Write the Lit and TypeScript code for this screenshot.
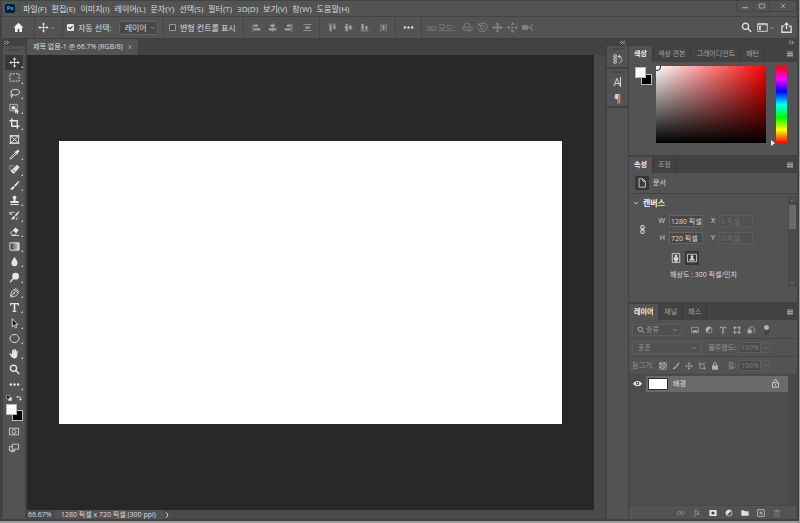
import { LitElement, html, css, svg, TemplateResult } from "lit";
import { customElement, property } from "lit/decorators.js";

const ICONS: Record<string, TemplateResult> = {
  home: svg`<path class="f" d="M6 .8 .6 6h1.6v5h2.9V7.6h1.8V11h2.9V6h1.6z"/>`,
  move: svg`<path class="s" d="M6 1.5v9M1.5 6h9"/><path class="f" d="M6 .3 4.2 2.6h3.6zM6 11.7l1.8-2.3H4.2zM.3 6l2.3 1.8V4.2zM11.7 6 9.4 4.2v3.6z"/>`,
  marquee: svg`<path class="s" stroke-dasharray="2 1.3" d="M1 2h10v8H1z"/>`,
  lasso: svg`<ellipse class="s" cx="6.8" cy="4.6" rx="4.6" ry="3.1"/><path class="s" d="M3.3 6.6C1.2 7 1.4 9 3 8.8s1.3-1.6.3-2.2M3.2 8.8 2.6 11"/>`,
  object: svg`<path class="s" opacity=".7" d="M1 1.5h8v7H1z"/><path class="f" d="M3 3.5h4v3.6H3zM6.5 5v6.5L8 10l1 2 1.2-.6-1-1.9h1.9z"/>`,
  crop: svg`<path class="s w" d="M3 .5V9h8.5M.5 3H9v8.7"/>`,
  frame: svg`<path class="s" d="M1.5 2h9v8h-9zM1.5 2l9 8M10.5 2l-9 8M.5 2h11M.5 10h11"/>`,
  dropper: svg`<path class="s" d="M7 4 2 9l-.8 2L3 10.300l5-5"/><path class="f" d="m5.700 3.200 3.200 3.200.8-.8-.6-.8 2-2.100c.7-.9-1-2.500-1.900-1.800L7.200 3l-.7-.6z"/>`,
  heal: svg`<path class="f" d="M8.800.8 11.500 3.500 5.200 11 1.600 7.500z"/><path class="s d" stroke-width=".6" d="m4.500 6.500 2.500 2"/><path class="s" stroke-dasharray="1 1" d="M1 6V2h4.500"/>`,
  brush: svg`<path class="f" d="M11.300.8c-2 .8-4.600 3.600-5.800 5.400l1.300 1.200C8.500 6 10.900 3 11.300.8zM4.800 6.800C3 6.800 3.200 9.500.8 9.900c2 1.500 5.100.7 5.300-1.900z"/>`,
  stamp: svg`<path class="f" d="M6 .7a2.100 2.100 0 0 0-1.600 3.500c.7.9.6 1.600.2 2.400H1.500v2.200h9V6.600H7.400c-.4-.8-.5-1.500.2-2.400A2.100 2.100 0 0 0 6 .7zM1.500 9.800h9V11h-9z"/>`,
  history: svg`<path class="f" d="M11.300 1.200c-1.800.7-4 3.200-5 4.700l1.200 1C9 5.700 11 3.200 11.300 1.200zM5.600 6.500C4 6.500 4.200 9 2 9.500c1.800 1.500 4.700.7 4.800-1.800z"/><path class="s" d="M1 2v2.500h2.500M1.300 4.300C2.500 2 4.500 2 6 2.700M9 8c0 1.500-.6 2.300-1.500 3"/>`,
  eraser: svg`<path class="f" d="m6.800 1.700 3.800 2.900-2.700 3.200-3.700-2.900z"/><path class="s" d="M4 5.200 1.500 8l2.200 2h2.500l1.500-2M3 10.300h8"/>`,
  gradient: svg`<defs><linearGradient id="g"><stop offset="0" stop-color="#333"/><stop offset="1" stop-color="#ddd"/></linearGradient></defs><path class="ramp" d="M1 2h10v8H1z"/>`,
  drop: svg`<path class="f" d="M6 .8C5 3 2.600 5.200 2.600 7.700a3.400 3.400 0 0 0 6.800 0C9.400 5.200 7 3 6 .8z"/>`,
  dodge: svg`<circle class="f" cx="7.200" cy="4.500" r="3.700"/><path class="s w" d="M4.500 7.300 1.200 11"/>`,
  pen: svg`<path class="s" d="m7 1.500 3.700 3.400-1 1.300c.2 2.300-2 3.900-6.700 4.600L1.800 10C2.200 6 3.700 3.200 6 3zM2 10.500l3.500-4M6 3l3.700 3.200"/><circle class="f" cx="6" cy="6.200" r=".9"/>`,
  type: svg`<path class="f" d="M1.200 1.200h9.600v2.900H9.900c-.2-1.300-.7-1.700-1.700-1.700H6.900v7c0 .6.300.8 1.400.9v.7H3.700v-.7c1.100-.1 1.400-.3 1.400-.9v-7H3.800c-1 0-1.500.4-1.700 1.700h-.9z"/>`,
  arrow: svg`<path class="k" d="M3.500.8v8.900l2.100-1.900 1.400 3 1.400-.7L7 7.200h2.700z"/>`,
  ellipse: svg`<path class="s" d="M4 1.800h4l2.800 2.700v3L8 10.200H4L1.200 7.500v-3z"/>`,
  hand: svg`<path class="f" d="M3.300 7V2.600c0-1 1.200-1 1.300 0l.2 2.600V1.500c0-1 1.300-1 1.400 0v3.700l.3-3.300c.1-.9 1.300-.8 1.300.1l-.1 3.600.6-2.300c.3-.9 1.400-.5 1.300.3L9 8.200c-.3 2-1.300 3.200-3.200 3.200-1.700 0-2.500-.8-3.300-2L.7 6.900c-.5-.8.5-1.500 1.200-.8z"/>`,
  zoom: svg`<circle class="s w" cx="4.900" cy="4.700" r="3.400"/><path class="s w" d="m7.400 7.200 3.800 3.800"/>`,
  dots: svg`<circle class="f" cx="2" cy="6" r="1.300"/><circle class="f" cx="6" cy="6" r="1.300"/><circle class="f" cx="10" cy="6" r="1.300"/>`,
  mask: svg`<path class="s" d="M.5 2h11v8H.5z"/><circle class="s" cx="6" cy="6" r="2.400"/>`,
  screens: svg`<path class="s" d="M4 2h7.500v6H4zM4 5H.5v4.500H7V8M2 11h5"/>`,
  defaults: svg`<path class="f" d="M4.500 4.500h7v7h-7z"/><path class="k" d="M1 1h6.500v6.500H1z"/>`,
  swap: svg`<path class="s w" d="M3 4h6v5"/><path class="f" d="M4 .8v6.400L.5 4zM5.800 8h6.400L9 11.600z"/>`,
  chevron: svg`<path class="s" d="m3 4.500 3 3 3-3"/>`,
  up: svg`<path class="s" d="m3 7.500 3-3 3 3"/>`,
  right: svg`<path class="s w" d="m4.500 2 3 4-3 4"/>`,
  alignL: svg`<path class="s" d="M1.500.5v11"/><path class="f" d="M3 2h5v3H3zM3 7h8v3H3z"/>`,
  alignC: svg`<path class="s" d="M6 .5v11"/><path class="f" d="M3 2h6v3H3zM1 7h10v3H1z"/>`,
  alignR: svg`<path class="s" d="M10.500.5v11"/><path class="f" d="M4 2h5v3H4zM1 7h8v3H1z"/>`,
  distV: svg`<path class="s" d="M.5 2h11M.5 10h11"/><path class="f" d="M3 4.500h6v3H3z"/>`,
  alignT: svg`<path class="s" d="M.5 1.500h11"/><path class="f" d="M2 3h3v8H2zM7 3h3v5H7z"/>`,
  alignM: svg`<path class="s" d="M.5 6h11"/><path class="f" d="M2 1h3v10H2zM7 3h3v6H7z"/>`,
  alignB: svg`<path class="s" d="M.5 10.500h11"/><path class="f" d="M2 1h3v8H2zM7 4h3v5H7z"/>`,
  distH: svg`<path class="s" d="M2.500.5v11M9.500.5v11"/><path class="f" d="M4.700 2.500h2.600v7H4.700z"/>`,
  orbit: svg`<circle class="s" cx="5.500" cy="4" r="2.800"/><path class="s" d="M2.700 4C-.5 6 1 9 6 9.200h3M8.300 5c4 1.500 3.500 4 .7 4.200M9 7 7 9.200 9 11"/>`,
  roll: svg`<circle class="s" cx="6" cy="6" r="2"/><path class="s" d="M2 1v3h3M2 3.800C5-1.200 12 1.500 11 6.500S2.500 12 1.200 7"/>`,
  pan: svg`<path class="s" d="M6 2v8M2 6h8M4 4l4 4M8 4 4 8"/><path class="f" d="M6 0 3.800 3h4.400zM6 12l2.200-3H3.800zM0 6l3 2.200V3.800zM12 6 9 3.800v4.400z"/>`,
  slide: svg`<path class="f" d="M6 0 3.800 3h4.400zM6 12 8.200 9H3.800zM0 6l3 2.200V3.800zM12 6 9 3.800v4.400zM4.800 4.800h2.400v2.400H4.800z"/>`,
  camera: svg`<path class="f" d="M0 3.500h6.500v5H0zM6.500 6 9 4v4z"/><path class="s" d="M11.500 2 9.800 6l1.700 4"/>`,
  workspace: svg`<path class="s" d="M.8 1.800h10.400v8.400H.8zM.8 3h10.400"/><path class="f" d="M2.200 4.300h2v4.500h-2z"/>`,
  share: svg`<path class="s w" d="M3.500 4.500H1v6.700h10V4.500H8.500M6 8V1.500"/><path class="f" d="M6 0 3.200 3.200h5.600z"/>`,
  min: svg`<path class="f" d="M2 7.500h8v2H2z"/>`,
  max: svg`<path class="s w" d="M2 3h8v6H2z"/>`,
  close: svg`<path class="s w" d="m3 2.500 6 7M9 2.500l-6 7"/>`,
  left2: svg`<path class="s w" d="M5.500 3 2.500 6l3 3M10 3 7 6l3 3"/>`,
  right2: svg`<path class="s w" d="m2 3 3 3-3 3M6.500 3l3 3-3 3"/>`,
  menu: svg`<path class="f" d="M0 1h12v2H0zM0 4h12v2H0zM0 7h12v4H0z"/>`,
  versions: svg`<path class="s" d="M1 1h3v2.600H1zM1 4.700h3v2.600H1zM1 8.400h3V11H1zM7.500 11c3-1.500 4-5 1.500-8H6.500"/><path class="f" d="M8.500.5v5L5.500 3z"/>`,
  doc: svg`<path class="s" d="M2.500 1h4.500l3 3v7H2.500zM7 1v3h3"/>`,
  chain: svg`<rect class="s w" x="3.800" y=".7" width="4.400" height="5" rx="2"/><rect class="s w" x="3.800" y="6.300" width="4.400" height="5" rx="2"/><path class="s" d="M6 4v4"/>`,
  portrait: svg`<path class="s" d="M1.500.7h9v10.600h-9z"/><circle class="f" cx="6" cy="3.500" r="1.500"/><path class="f" d="M3.300 5h5.400v3.500H7.700v2H4.300v-2h-1z"/>`,
  landscape: svg`<path class="s" d="M.5 1.500h11v9H.5z"/><circle class="f" cx="6" cy="4.500" r="1.700"/><path class="f" d="M2.800 9c0-4 6.400-4 6.400 0z"/>`,
  picture: svg`<path class="s" d="M1 2h10v8H1z"/><path class="f" d="m2 9 2.500-3.500 1.700 1.700 1.300-1.500L10 9z"/>`,
  adjust: svg`<circle class="s" cx="6" cy="6" r="4.600"/><path class="f" d="M2.700 9.300A4.600 4.600 0 0 1 9.300 2.700z"/>`,
  shape: svg`<path class="s" d="M2.500 2.500h7v7h-7z"/><path class="f" d="M.8.8h3v3h-3zM8.200.8h3v3h-3zM.8 8.200h3v3h-3zM8.200 8.200h3v3h-3z"/>`,
  smart: svg`<path class="s" d="M5 4V1h4l2 2v6H9"/><path class="f" d="M1 5.500h6V11H1z"/><path class="s" d="M2.500 5.500V3H5"/>`,
  checker: svg`<path class="s" d="M1 1h10v10H1z"/><path class="f" d="M1 1h3v3H1zM4 4h2.500v2.500H4zM6.500 1.500H9V4H6.500zM6.500 6.500H9V9H6.500zM1.500 6.500H4V9H1.500zM9 4h2v2.500H9zM4 9h2.500v2H4z"/>`,
  artboard: svg`<path class="s" d="M3 .5v9h8.500M.5 3h7l2 2v6.500M7.500 3 11 1"/>`,
  lock: svg`<path class="f" d="M1.500 5h9v6.500h-9z"/><path class="s w" d="M3.800 5V3.200a2.200 2.200 0 0 1 4.400 0V5"/>`,
  lockLine: svg`<path class="s" d="M2 5h8v6H2zM3.800 5V3.200a2.200 2.200 0 0 1 4.400 0V5M6 7v2.300"/>`,
  eye: svg`<path class="f" d="M0 6.200C3 1.500 9 1.500 12 6.200 9 10.700 3 10.700 0 6.200z"/><circle cx="6" cy="6" r="2.200" fill="#4d4d4d"/><circle class="f" cx="6" cy="6" r="1"/>`,
  link: svg`<rect class="s w" x=".7" y="3.800" width="5" height="4.400" rx="2"/><rect class="s w" x="6.300" y="3.800" width="5" height="4.400" rx="2"/><path class="s" d="M4 6h4"/>`,
  maskFill: svg`<path class="f" d="M.5 1.500h11v9H.5z"/><circle cx="6" cy="6" r="2.400" fill="#444"/>`,
  folder: svg`<path class="f" d="M.5 2h4l1 1.300h6V10H.5z"/>`,
  plus: svg`<path class="s" d="M1 1h10v10H1zM6 3.500v5M3.500 6h5"/>`,
  trash: svg`<path class="f" d="M1.500 2h9v1.200h-9zM4.500 1h3v1h-3z"/><path class="s" d="M2.500 4h7v7.300h-7zM4.700 5v5M7.300 5v5"/>`,
};

@customElement("ui-icon")
export class UiIcon extends LitElement {
  @property() name = "";
  static styles = css`
    :host { display: inline-flex; width: 11px; height: 11px; flex: none; color: inherit; }
    svg { width: 100%; height: 100%; overflow: visible; }
    .f { fill: currentColor; }
    .s { fill: none; stroke: currentColor; stroke-width: 1; }
    .w { stroke-width: 1.500; }
    .d { stroke: #535353; }
    .k { fill: #111; stroke: currentColor; stroke-width: 1; }
    .ramp { fill: url(#g); stroke: currentColor; stroke-width: 1; }
  `;
  render() {
    return html`<svg viewBox="0 0 12 12" aria-hidden="true">${ICONS[this.name]}</svg>`;
  }
}

const icon = (name: string, cls = "") => html`<ui-icon class=${cls} name=${name}></ui-icon>`;

const MENUS = ["파일(F)", "편집(E)", "이미지(I)", "레이어(L)", "문자(Y)", "선택(S)", "필터(T)", "3D(D)", "보기(V)", "창(W)", "도움말(H)"];
const TOOLS = ["move", "marquee", "lasso", "object", "crop", "frame", "dropper", "heal", "brush", "stamp", "history", "eraser", "gradient", "drop", "dodge", "pen", "type", "arrow", "ellipse", "hand", "zoom", "dots"];
const NO_FLYOUT = ["frame", "zoom"];

@customElement("app-root")
export class AppRoot extends LitElement {
  static styles = css`
    :host {
      display: block;
      font: 8px/12px "Open Sans", "Noto Sans CJK KR", sans-serif;
      color: #dcdcdc;
      --bar: #535353;
      --dark: #424242;
      --dim: #949494;
    }
    * { box-sizing: border-box; }
    button, input, select {
      font: inherit; color: inherit; background: none; border: 0; border-radius: 0;
      padding: 0; margin: 0; appearance: none; outline: none; min-width: 0;
    }
    button { display: inline-flex; align-items: center; justify-content: center; }
    .app {
      min-height: 100vh; display: flex; flex-direction: column; background: var(--dark);
      border: solid #9c9c9c; border-width: 0 1px 2px 0; padding: 0 2px 2px;
    }
    .row { display: flex; align-items: center; }
    .menubar { height: 17px; background: var(--bar); border-top: 1px solid #444; border-bottom: 1px solid #444; padding-left: 3px; }
    .logo {
      width: 10px; height: 9px; border-radius: 2px; background: #001e36; color: #31a8ff;
      font-size: 6px; line-height: 9px; font-weight: 700; text-align: center; margin-right: 8px;
    }
    .menus { display: flex; gap: 5px; flex: 1; }
    .menus button { white-space: nowrap; }
    .window { display: flex; align-self: flex-start; height: 11px; border: 1px solid #444; border-top: 0; border-radius: 0 0 2px 2px; color: #a4a4a4; }
    .window button { width: 16px; }
    .window button:last-child { width: 27px; }
    .window button + button { border-left: 1px solid #444; }
    .window ui-icon { width: 8px; height: 8px; }

    .options { height: 21px; background: var(--bar); }
    .group { display: flex; align-items: center; height: 100%; white-space: nowrap; }
    .group + .group { border-left: 1px solid #464646; }
    .home { width: 32px; justify-content: center; color: #f0f0f0; }
    .current { width: 28px; padding-left: 3px; }
    .auto { width: 101px; padding-left: 4px; }
    .show { width: 80px; padding-left: 5px; }
    .align { padding: 0 4px; color: #a0a0a0; }
    .align button { width: 16px; }
    .align ui-icon { width: 9px; height: 9px; }
    .align button:last-child { margin-left: 3px; }
    .more { width: 26px; justify-content: center; }
    .mode { padding-left: 4px; color: #848484; flex: 1; }
    .mode span { width: 34px; }
    .mode button { width: 15px; }
    .small { width: 8px; height: 8px; color: #a0a0a0; }
    .check { display: flex; align-items: center; gap: 4px; }
    .check input { width: 7px; height: 7px; border: 1px solid #999; border-radius: 1px; background: #484848; }
    .check input:checked { background: #e8e8e8; border-color: #e8e8e8; position: relative; }
    .check input:checked::after {
      content: ""; position: absolute; inset: 0 1px 1px 1px; border: solid #333;
      border-width: 0 1px 1px 0; transform: rotate(40deg);
    }
    .pick { position: relative; display: block; border: 1px solid #626262; border-radius: 2px; background: #484848; }
    .pick select { display: block; width: 100%; height: 100%; padding-left: 5px; }
    .pick ui-icon { position: absolute; right: 2px; top: calc(50% - 4px); width: 8px; height: 8px; pointer-events: none; }
    .auto .pick { width: 39px; height: 14px; margin-left: 7px; }
    .auto .pick ui-icon { right: 0; color: #999; }
    .tail { gap: 5px; padding-right: 5px; }
    .tail button { display: flex; }

    .main { flex: 1; display: flex; border-top: 1px solid #3e3e3e; }
    .strip { height: 7px; display: flex; align-items: center; color: #c8c8c8; }
    .strip ui-icon { width: 7px; height: 7px; }
    .end { justify-content: flex-end; padding-right: 2px; }

    .tools { width: 25px; display: flex; flex-direction: column; padding: 0 2px 0 1px; }
    .toolbox { flex: 1; background: var(--bar); padding: 0 2px; display: flex; flex-direction: column; align-items: center; }
    .grip { width: 12px; height: 2px; margin: 3px 0 4px; border: solid #474747; border-width: 1px 0; }
    .toolgrid { display: grid; grid-template-rows: repeat(22, 1fr); height: 337px; width: 100%; color: #e6e6e6; }
    .toolgrid button { position: relative; width: 100%; }
    .toolgrid button.on { background: #383838; }
    .fly::after {
      content: ""; position: absolute; right: 0; bottom: 2px;
      border: 1px solid; border-color: transparent #ccc #ccc transparent;
    }
    .mini { display: flex; justify-content: space-between; width: 100%; padding: 0 1px; margin: 3px 0; }
    .mini ui-icon { width: 6px; height: 6px; display: flex; }
    .swatches { position: relative; width: 17px; height: 17px; }
    .swatches button { position: absolute; width: 11px; height: 11px; border: 1px solid #b8b8b8; }
    .fg { left: 0; top: 0; background: #fff; z-index: 1; }
    .bg { right: 0; bottom: 0; background: #000; }
    .lower { display: flex; flex-direction: column; gap: 5px; margin-top: 5px; }
    .lower ui-icon { width: 10px; height: 11px; }

    .document { flex: 1; min-width: 0; display: flex; flex-direction: column; }
    .tabs { display: flex; height: 16px; }
    .doctab { background: var(--bar); padding: 0 5px 0 6px; display: flex; align-items: center; border-right: 1px solid #3a3a3a; font-size: 7px; white-space: nowrap; width: 112px; justify-content: space-between; }
    .doctab ui-icon { width: 6px; height: 6px; color: #aaa; }
    .view { flex: 1; display: grid; grid-template-columns: 1fr 11px; }
    .stage { background: #282828; padding: 32px; display: grid; align-items: center; }
    .canvas { background: #fff; aspect-ratio: 16 / 9; }
    .vscroll { background: #4a4a4a; }
    .status { height: 9px; font-size: 7px; line-height: 9px; background: #4a4a4a; }
    .status label { display: flex; }
    .status input { width: 26px; padding-left: 1px; height: 9px; }
    .status button { background: var(--bar); padding-left: 6px; gap: 7px; height: 9px; margin-left: 2px; width: 108px; justify-content: flex-start; white-space: nowrap; }
    .status ui-icon { width: 8px; height: 8px; }

    .dock { width: 24px; display: flex; flex-direction: column; padding: 0 1px 0 2px; }
    .cell { background: var(--bar); display: flex; flex-direction: column; align-items: center; margin-bottom: 2px; color: #d4d4d4; }
    .cell button { height: 16px; font-size: 11px; line-height: 16px; }
    .cell.rest { flex: 1; margin: 0; }
    .cell .grip { margin: 2px 0 1px; }
    .cell ui-icon { width: 10px; height: 10px; }
    .caret { border-right: 1px solid #d4d4d4; height: 10px; line-height: 10px; }

    .panels { width: 168px; display: flex; flex-direction: column; font-size: 7px; line-height: 10px; }
    .panel { background: var(--bar); margin-bottom: 2px; display: flex; flex-direction: column; }
    .panel.layers { flex: 1; margin: 0; }
    .ptabs { display: flex; height: 16px; background: var(--dark); color: #a0a0a0; }
    .ptabs button { padding: 0 5px; border-right: 1px solid #3a3a3a; white-space: nowrap; }
    .ptabs .on { background: var(--bar); color: #f0f0f0; font-weight: 600; }
    .ptabs .burger { margin-left: auto; border: 0; padding: 0 4px; }
    .burger ui-icon { width: 6px; height: 6px; }

    .color { display: grid; grid-template-columns: 17px 1fr 11px; column-gap: 4px; padding: 4px 10px 12px 6px; }
    .color .swatches { margin-top: 1px; height: 18px; }
    .field { height: 77px; margin-right: 6px; position: relative; background: linear-gradient(to top, #000, transparent), linear-gradient(to right, #fff, #f00); overflow: hidden; }
    .field::before { content: ""; position: absolute; left: -3px; top: -3px; width: 6px; height: 6px; border: 1px solid #222; border-radius: 50%; }
    .hue { position: relative; background: linear-gradient(#f00, #f0f 17%, #00f 33%, #0ff 50%, #0f0 67%, #ff0 83%, #f00); }
    .hue::before { content: ""; position: absolute; left: -5px; bottom: -3px; border: 3px solid transparent; border-left: 4px solid #eee; border-right: 0; }

    .kind { height: 21px; padding-left: 6px; gap: 4px; border-bottom: 1px solid #444; }
    .dark { background: #383838; width: 14px; height: 14px; border-radius: 1px; }
    .kind ui-icon { width: 10px; height: 10px; }
    .props { display: grid; grid-template-columns: 1fr 9px; padding-top: 2px; padding-bottom: 15px; }
    .section { display: flex; align-items: center; gap: 3px; padding-left: 3px; height: 14px; font-size: 8px; font-weight: 700; color: #eee; margin: 0; }
    .section ui-icon { width: 8px; height: 8px; }
    .dims { display: grid; grid-template-columns: 17px 10px 34px 8px 34px; column-gap: 4px; row-gap: 5px; align-items: center; padding: 5px 0 0 5px; justify-content: start; }
    .dims label { text-align: right; }
    .dims input { height: 12px; width: 100%; border: 1px solid #646464; background: #484848; padding-left: 1px; }
    .dims input:disabled { color: #6e6e6e; background: #505050; border-color: #5c5c5c; }
    .off { color: #828282; }
    .chain { grid-row: 1 / 3; justify-self: center; width: 9px; height: 9px; }
    .dims .x { grid-column: 4; }
    .orient { display: flex; gap: 2px; padding: 7px 0 0 40px; }
    .orient button { width: 14px; height: 14px; }
    .orient ui-icon { width: 10px; height: 10px; }
    .res { margin: 5px 0 0 41px; }
    .pscroll { background: #4a4a4a; display: flex; flex-direction: column; align-items: center; color: #8a8a8a; height: 91px; }
    .pscroll ui-icon { width: 7px; height: 7px; margin: 1px 0; }
    .thumb { width: 7px; height: 24px; background: #6a6a6a; margin-bottom: auto; }

    .line { display: flex; align-items: center; height: 18px; padding-left: 3px; border-bottom: 1px solid #474747; color: var(--dim); white-space: nowrap; }
    .line .pick { height: 12px; background: #505050; border-color: #5c5c5c; }
    .filter { margin-top: 1px; }
    .filter .pick { width: 50px; }
    .filter select { padding-left: 13px; }
    .pick .glass { left: 4px; right: auto; color: #aaa; }
    .icons { display: flex; align-items: center; color: #b0b0b0; }
    .icons button { width: 14px; }
    .icons ui-icon { width: 8px; height: 8px; }
    .filter .icons { margin-left: 6px; }
    .icons .toggle { width: 5px; height: 10px; margin-left: 6px; border-radius: 3px; background: #444; }
    .toggle::before { content: ""; width: 5px; height: 5px; border-radius: 50%; background: #b0b0b0; align-self: flex-start; }
    .blend .pick { width: 69px; }
    .num { margin-left: auto; display: flex; align-items: center; gap: 3px; }
    .num input { width: 22px; height: 11px; background: #4a4a4a; border: 1px solid #5c5c5c; color: #808080; padding-left: 1px; }
    .num button { width: 9px; height: 11px; border: 1px solid #5c5c5c; margin: 0 27px 0 -3px; }
    .num ui-icon { width: 6px; height: 6px; }
    .locks { margin-left: 3px; }
    .locks button { width: 13px; }
    .list { flex: 1; background: #4d4d4d; display: grid; grid-template-columns: 1fr 9px; }
    .list::after { content: ""; background: #494949; }
    .layer { height: 17px; padding-left: 4px; color: #e4e4e4; }
    .layer .body { flex: 1; height: 16px; background: #6a6a6a; margin-left: 4px; padding: 0 8px 0 2px; }
    .preview { width: 20px; height: 12px; background: #fff; border: 1px solid #333; margin-right: 5px; }
    .body .pin { margin-left: auto; }
    .layer ui-icon { width: 9px; height: 9px; }
    .actions { height: 14px; justify-content: flex-end; padding-right: 12px; border-top: 1px solid #484848; color: #e0e0e0; }
    .actions button { width: 16px; }
    .actions ui-icon { width: 8px; height: 8px; }
    .actions .off { color: #828282; }
    .fx { font-style: italic; font-size: 8px; font-family: "Liberation Serif", serif; color: #a8a8a8; }
  `;

  private btn(name: string, label = name) {
    return html`<button aria-label=${label}>${icon(name)}</button>`;
  }

  private tabs(names: string[]) {
    return html`<div class="ptabs">
      ${names.map((n, i) => html`<button class=${i ? "" : "on"}>${n}</button>`)}
      <button class="burger" aria-label="메뉴">${icon("menu")}</button>
    </div>`;
  }

  render() {
    return html`<div class="app">
      <header>
        <div class="menubar row">
          <div class="logo">Ps</div>
          <nav class="menus">${MENUS.map((m) => html`<button>${m}</button>`)}</nav>
          <div class="window">${["min", "max", "close"].map((n) => this.btn(n))}</div>
        </div>
        <div class="options row">
          <div class="group home">${this.btn("home")}</div>
          <div class="group current">${icon("move")}${icon("chevron", "small")}</div>
          <div class="group auto">
            <label class="check"><input type="checkbox" checked />자동 선택:</label>
            <div class="pick"><select aria-label="대상"><option>레이어</option></select>${icon("chevron")}</div>
          </div>
          <div class="group show"><label class="check"><input type="checkbox" />변형 컨트롤 표시</label></div>
          <div class="group align">${["alignL", "alignC", "alignR", "distV"].map((n) => this.btn(n))}</div>
          <div class="group align">${["alignT", "alignM", "alignB", "distH"].map((n) => this.btn(n))}</div>
          <div class="group more">${this.btn("dots")}</div>
          <div class="group mode"><span>3D 모드:</span>${["orbit", "roll", "pan", "slide", "camera"].map((n) => this.btn(n))}</div>
          <div class="row tail">
            ${this.btn("zoom")}
            <button aria-label="작업 영역">${icon("workspace")}${icon("chevron", "small")}</button>
            ${this.btn("share")}
          </div>
        </div>
      </header>

      <main class="main">
        <aside class="tools">
          <div class="strip">${icon("right2")}</div>
          <div class="toolbox">
            <div class="grip"></div>
            <div class="toolgrid">
              ${TOOLS.map((t, i) => html`<button aria-label=${t} class="${i ? "" : "on"} ${NO_FLYOUT.includes(t) ? "" : "fly"}">${icon(t)}</button>`)}
            </div>
            <div class="mini">${icon("defaults")}${icon("swap")}</div>
            <div class="swatches"><button class="fg" aria-label="전경색"></button><button class="bg" aria-label="배경색"></button></div>
            <div class="lower">${this.btn("mask")}${this.btn("screens")}</div>
          </div>
        </aside>

        <section class="document">
          <div class="tabs"><div class="doctab"><span>제목 없음-1 @ 66.7% (RGB/8)</span>${this.btn("close")}</div></div>
          <div class="view">
            <div class="stage"><div class="canvas"></div></div>
            <div class="vscroll"></div>
          </div>
          <div class="status row">
            <label><input aria-label="확대/축소" value="66.67%" /></label>
            <button>1280 픽셀 x 720 픽셀 (300 ppi)${icon("right")}</button>
          </div>
        </section>

        <aside class="dock">
          <div class="strip end">${icon("left2")}</div>
          <div class="cell"><div class="grip"></div><button aria-label="작업 내역">${icon("versions")}</button></div>
          <div class="cell"><div class="grip"></div>
            <button><span class="caret">A</span></button>
            <button>¶</button>
          </div>
          <div class="cell rest"></div>
        </aside>

        <aside class="panels">
          <div class="strip end">${icon("right2")}</div>
          <section class="panel">
            ${this.tabs(["색상", "색상 견본", "그레이디언트", "패턴"])}
            <div class="color">
              <div class="swatches"><button class="fg" aria-label="전경색"></button><button class="bg" aria-label="배경색"></button></div>
              <div class="field"></div>
              <div class="hue"></div>
            </div>
          </section>

          <section class="panel">
            ${this.tabs(["속성", "조정"])}
            <div class="kind row"><button class="dark" aria-label="문서">${icon("doc")}</button>문서</div>
            <div class="props">
              <div>
                <h2 class="section">${icon("chevron")}캔버스</h2>
                <div class="dims">
                  ${icon("chain", "chain")}
                  <label for="w">W</label><input id="w" value="1280 픽셀" />
                  <label class="x" for="x">X</label><input id="x" value="0 픽셀" disabled />
                  <label for="h">H</label><input id="h" value="720 픽셀" />
                  <label class="x" for="y">Y</label><input id="y" value="0 픽셀" disabled />
                </div>
                <div class="orient"><button aria-label="세로">${icon("portrait")}</button><button class="dark" aria-label="가로">${icon("landscape")}</button></div>
                <div class="res">해상도 : 300 픽셀/인치</div>
              </div>
              <div class="pscroll">${icon("up")}<div class="thumb"></div>${icon("chevron")}</div>
            </div>
          </section>

          <section class="panel layers">
            ${this.tabs(["레이어", "채널", "패스"])}
            <div class="line filter">
              <div class="pick">${icon("zoom", "glass")}<select aria-label="필터"><option>종류</option></select>${icon("chevron")}</div>
              <div class="icons">${["picture", "adjust", "type", "shape", "smart"].map((n) => this.btn(n))}<button class="toggle" aria-label="필터 전환"></button></div>
            </div>
            <div class="line blend">
              <div class="pick"><select aria-label="혼합 모드"><option>표준</option></select>${icon("chevron")}</div>
              <div class="num"><label for="op">불투명도:</label><input id="op" value="100%" /><button aria-label="열기">${icon("chevron")}</button></div>
            </div>
            <div class="line">잠그기:
              <div class="icons locks">${["checker", "brush", "move", "artboard", "lock"].map((n) => this.btn(n))}</div>
              <div class="num"><label for="fill">칠:</label><input id="fill" value="100%" /><button aria-label="열기">${icon("chevron")}</button></div>
            </div>
            <div class="list">
              <div class="layer row">${this.btn("eye")}
                <div class="body row"><div class="preview"></div>배경${icon("lockLine", "pin")}</div>
              </div>
            </div>
            <div class="actions row">
              <button class="off" aria-label="연결">${icon("link")}</button>
              <button class="fx">fx</button>
              ${["maskFill", "adjust", "folder", "plus"].map((n) => this.btn(n))}
              <button class="off" aria-label="삭제">${icon("trash")}</button>
            </div>
          </section>
        </aside>
      </main>
    </div>`;
  }
}
